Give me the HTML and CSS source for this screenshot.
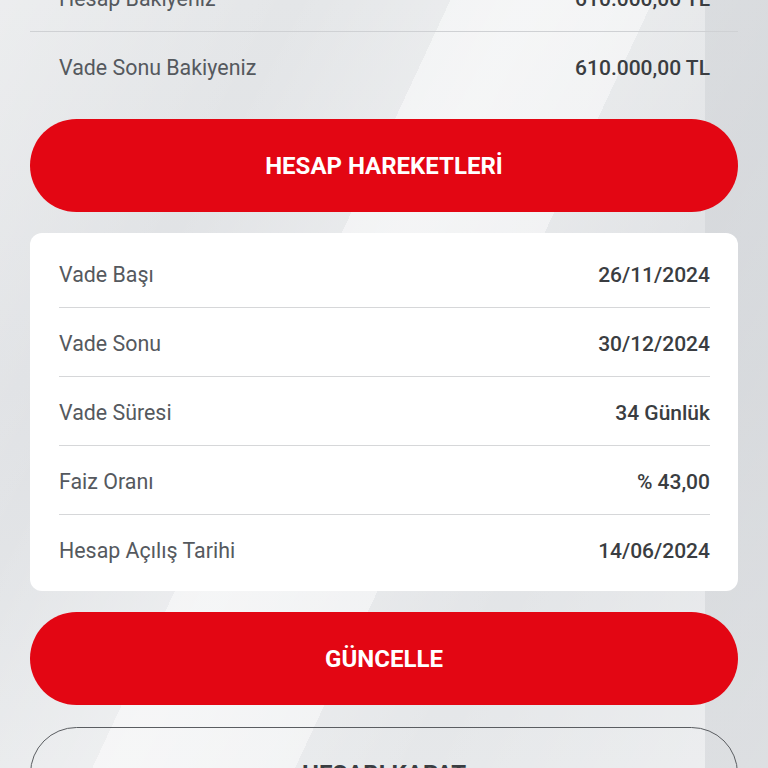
FILE: index.html
```html
<!DOCTYPE html>
<html lang="tr">
<head>
<meta charset="utf-8">
<title>Hesap Detayı</title>
<link rel="stylesheet" href="styles.css">
</head>
<body>
<div class="page">
  <div class="summary">
    <div class="row wide">
      <span class="label">Hesap Bakiyeniz</span>
      <span class="value">610.000,00 TL</span>
    </div>
    <div class="row wide last">
      <span class="label">Vade Sonu Bakiyeniz</span>
      <span class="value">610.000,00 TL</span>
    </div>
  </div>

  <button class="btn primary">HESAP HAREKETLERİ</button>

  <div class="card">
    <div class="row">
      <span class="label">Vade Başı</span>
      <span class="value">26/11/2024</span>
    </div>
    <div class="row">
      <span class="label">Vade Sonu</span>
      <span class="value">30/12/2024</span>
    </div>
    <div class="row">
      <span class="label">Vade Süresi</span>
      <span class="value">34 Günlük</span>
    </div>
    <div class="row">
      <span class="label">Faiz Oranı</span>
      <span class="value">% 43,00</span>
    </div>
    <div class="row last">
      <span class="label">Hesap Açılış Tarihi</span>
      <span class="value">14/06/2024</span>
    </div>
  </div>

  <button class="btn primary">GÜNCELLE</button>
  <button class="btn outline">HESABI KAPAT</button>
</div>
</body>
</html>
```

FILE: styles.css
```css
html, body {
  margin: 0;
  padding: 0;
}
body {
  width: 768px;
  height: 768px;
  overflow: hidden;
  font-family: Roboto, "Liberation Sans", Arial, sans-serif;
  background-color: #e4e6e8;
  background-image:
    linear-gradient(90deg, transparent 0, transparent 705px, rgba(205,208,212,0.5) 705px, rgba(205,208,212,0.5) 768px),
    linear-gradient(115deg, transparent 0, transparent 40%, rgba(255,255,255,0.45) 40%, rgba(255,255,255,0.45) 58%, transparent 58%),
    linear-gradient(118deg, rgba(255,255,255,0.3) 0, rgba(255,255,255,0.0) 25%, rgba(255,255,255,0.35) 45%, rgba(255,255,255,0) 70%, rgba(255,255,255,0.3) 100%),
    linear-gradient(180deg, #e4e6e8 0, #dfe1e4 50%, #e6e8ea 100%);
}
.page {
  display: flex;
  flex-direction: column;
  padding: 0 30px;
  margin-top: -37px;
}
.summary {
  display: flex;
  flex-direction: column;
}
.row {
  display: flex;
  justify-content: space-between;
  align-items: center;
  height: 24px;
  padding: 24px 0 20px;
  border-bottom: 1px solid #cfd1d4;
  font-size: 21px;
  line-height: 24px;
}
.row.wide {
  padding-left: 29px;
  padding-right: 28px;
}
.row.last {
  border-bottom: none;
}
.label {
  color: #55595e;
  font-weight: 400;
  font-size: 21.4px;
}
.value {
  color: #3a3d41;
  font-weight: 500;
}
.btn {
  display: block;
  width: 708px;
  height: 93px;
  border-radius: 47px;
  font-family: Roboto, "Liberation Sans", Arial, sans-serif;
  font-size: 24px;
  font-weight: 700;
  cursor: pointer;
  padding: 0;
}
.btn.primary {
  background: #e30613;
  color: #ffffff;
  border: none;
}
.summary + .btn {
  margin-top: 19px;
}
.card {
  margin-top: 21px;
  background: #ffffff;
  border-radius: 12px;
  padding: 6px 28px 8px 29px;
  display: flex;
  flex-direction: column;
}
.card .row {
  border-bottom-color: #d6d7d9;
}
.card + .btn {
  margin-top: 21px;
}
.btn.outline {
  margin-top: 22px;
  background: transparent;
  color: #3a3d41;
  border: 1.5px solid #5a5d61;
}
```
